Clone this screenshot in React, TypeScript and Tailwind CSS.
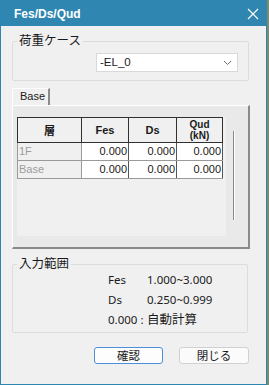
import React from "react";

const rows = [
  { name: "1F", fes: "0.000", ds: "0.000", qud: "0.000" },
  { name: "Base", fes: "0.000", ds: "0.000", qud: "0.000" },
];

const ranges = [
  { label: "Fes", value: "1.000~3.000", jp: false },
  { label: "Ds", value: "0.250~0.999", jp: false },
  { label: "0.000 :", value: "自動計算", jp: true },
];

export default function App() {
  return (
    <div className="flex w-[269px] h-[385px] bg-[#7d8a6f] font-['Noto_Sans','Noto_Sans_CJK_JP',sans-serif] text-[12px] text-[#1a1a1a]">
      <div className="flex flex-col w-[267px] h-[385px] border border-[#2c86b0] bg-[#f0f0f0]">
        {/* Title bar */}
        <div className="flex items-center justify-between h-[25px] bg-[#2f87b1] pl-[13px] pr-[6px] text-white">
          <span className="text-[12px] font-bold font-['Liberation_Sans',sans-serif]">Fes/Ds/Qud</span>
          <svg width="12" height="12" viewBox="0 0 12 12" className="mr-[1px]">
            <path d="M1 1 L11 11 M11 1 L1 11" stroke="white" strokeWidth="1.1" fill="none" />
          </svg>
        </div>

        <div className="flex flex-col pl-[11px] pr-[17px] pt-[7px]">
          {/* 荷重ケース */}
          <fieldset className="border border-[#dcdcdc] rounded-[2px] pb-[8px]">
            <legend className="ml-[4px] px-[2px] leading-[16px] text-[12.5px]">荷重ケース</legend>
            <div className="ml-[83px] mt-[4px] w-[142px] h-[19px] flex items-center justify-between border border-[#d9d9d9] bg-white pl-[3px] pr-[5px]">
              <span className="font-['Liberation_Sans',sans-serif] text-[11.5px]">-EL_0</span>
              <svg width="9" height="6" viewBox="0 0 9 6">
                <path d="M1 1 L4.5 4.5 L8 1" stroke="#6b6b6b" strokeWidth="1" fill="none" />
              </svg>
            </div>
          </fieldset>

          {/* Tab */}
          <div className="mt-[7px] flex">
            <div className="w-[38px] h-[17px] border-l border-t border-white border-r-2 border-r-[#8a8a8a] bg-[#f0f0f0] pl-[7px] leading-[15px] text-[11px] font-['Liberation_Sans',sans-serif]">
              Base
            </div>
          </div>
          <div className="w-[238px] h-[144px] border-l border-t border-white border-r-2 border-b-2 border-r-[#8a8a8a] border-b-[#8a8a8a] bg-[#e9e9e9] pl-[4px] pt-[11px] flex items-start">
            <div className="w-[209px] h-[119px] bg-[#f0f0f0]">
              <table className="border-collapse font-['Liberation_Sans',sans-serif] text-[11px]">
                <thead>
                  <tr className="h-[25px]">
                    <th className="w-[64px] border-[1.5px] border-[#303030] bg-[#f0f0f0] font-bold text-[11px] font-['Noto_Sans_CJK_JP',sans-serif]">層</th>
                    <th className="w-[47px] border-[1.5px] border-[#303030] bg-[#f0f0f0] font-bold">Fes</th>
                    <th className="w-[48px] border-[1.5px] border-[#303030] bg-[#f0f0f0] font-bold">Ds</th>
                    <th className="w-[46px] p-0 border-[1.5px] border-[#303030] bg-[#f0f0f0] font-bold text-[10px]">
                      <div className="flex flex-col items-center leading-[11px]">
                        <span>Qud</span>
                        <span>(kN)</span>
                      </div>
                    </th>
                  </tr>
                </thead>
                <tbody>
                  {rows.map((r) => (
                    <tr key={r.name} className="h-[18px]">
                      <td className="border border-[#9a9a9a] bg-[#f0f0f0] text-[#9d9d9d] pl-[1px] text-left">{r.name}</td>
                      <td className="border border-[#9a9a9a] border-r-[#555] bg-white text-right pr-[1px]">{r.fes}</td>
                      <td className="border border-[#9a9a9a] border-r-[#555] bg-white text-right pr-[1px]">{r.ds}</td>
                      <td className="border border-[#9a9a9a] border-r-[#555] bg-white text-right pr-[1px]">{r.qud}</td>
                    </tr>
                  ))}
                </tbody>
              </table>
            </div>
            <div className="ml-[7px] mt-[14px] w-[2px] h-[89px] border-l border-[#8a8a8a] border-r border-r-white" />
          </div>

          {/* 入力範囲 */}
          <fieldset className="mt-[7px] w-[236px] border border-[#dcdcdc] rounded-[2px] pb-[2px]">
            <legend className="ml-[4px] px-[2px] leading-[16px] text-[12.5px]">入力範囲</legend>
            <div className="-mt-[2px] flex flex-col">
              {ranges.map((g) => (
                <div key={g.label} className="flex items-center h-[20px] pl-[95px]">
                  <span className="w-[39px] flex-none whitespace-nowrap text-[11.5px]">{g.label}</span>
                  <span className={g.jp ? "text-[12.5px]" : "text-[11.5px]"}>{g.value}</span>
                </div>
              ))}
            </div>
          </fieldset>

          {/* Buttons */}
          <div className="mt-[14px] w-[237px] flex justify-end gap-[16px]">
            <button className="w-[69px] h-[17px] rounded-[3px] border border-[#4a90d9] bg-[#fdfdfd] text-[11.5px] leading-[15px]">確認</button>
            <button className="w-[70px] h-[17px] rounded-[3px] border border-[#d0d0d0] bg-[#fbfbfb] text-[11.5px] leading-[15px]">閉じる</button>
          </div>
        </div>
      </div>
    </div>
  );
}
